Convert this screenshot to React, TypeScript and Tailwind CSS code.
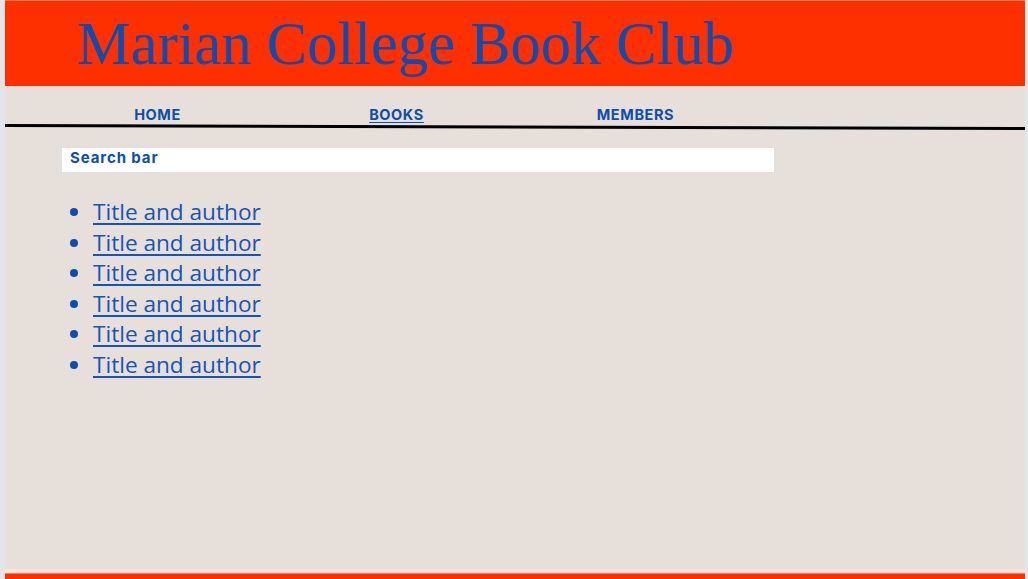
const books = [
  "Title and author",
  "Title and author",
  "Title and author",
  "Title and author",
  "Title and author",
  "Title and author",
];

const navItems = [
  { label: "HOME", active: false },
  { label: "BOOKS", active: true },
  { label: "MEMBERS", active: false },
];

export default function App() {
  return (
    <div className="flex h-[579px] w-full overflow-hidden bg-[#e4e5ea] pl-[5px] pr-[3px]">
      <div className="flex flex-1 flex-col">
        {/* Header */}
        <header className="h-[86px] border-t border-[#ff7a5c] bg-[#ff3000]">
          <h1
            className="pl-[72px] pt-[10px] text-[60.5px] leading-[66px] text-[#0d4db0]"
            style={{ fontFamily: '"Liberation Serif", serif' }}
          >
            Marian College Book Club
          </h1>
        </header>

        {/* Body */}
        <main
          className="flex flex-1 flex-col bg-[#e7dfd9]"
          style={{ fontFamily: '"Open Sans", sans-serif' }}
        >
          {/* Nav */}
          <nav className="flex pl-[33px] pt-[20px]" style={{ fontFamily: "Inter, sans-serif" }}>
            {navItems.map((item) => (
              <a
                key={item.label}
                href="#"
                className={
                  "w-[239px] text-center text-[14.5px] font-bold leading-[18px] tracking-[0.6px] text-[#0d4db0] " +
                  (item.active ? "underline underline-offset-2" : "no-underline")
                }
              >
                {item.label}
              </a>
            ))}
          </nav>
          <div className="h-[3px] origin-left rotate-[0.17deg] bg-black" />

          {/* Search bar */}
          <div
            className="ml-[57px] mt-[21px] h-[24px] w-[712px] bg-white px-[8px] text-[15px] font-bold leading-[20px] tracking-[0.9px] text-[#0d4db0]"
            style={{ fontFamily: "Inter, sans-serif" }}
          >
            Search bar
          </div>

          {/* Book list */}
          <ul className="ml-[88px] mt-[25px] list-disc text-[22.6px] leading-[30.6px] text-[#1554b8] marker:text-[#0d4db0]">
            {books.map((b, i) => (
              <li key={i} className="pl-0">
                <a href="#" className="underline underline-offset-[3px] decoration-[1.5px]">
                  {b}
                </a>
              </li>
            ))}
          </ul>
        </main>

        {/* Footer */}
        <div className="h-[3px] bg-[#efe8e3]" />
        <div className="h-[1px] bg-[#e7dfd9]" />
        <footer className="h-[6px] border-t border-[#ff7a5c] bg-[#ff3000]" />
      </div>
    </div>
  );
}
